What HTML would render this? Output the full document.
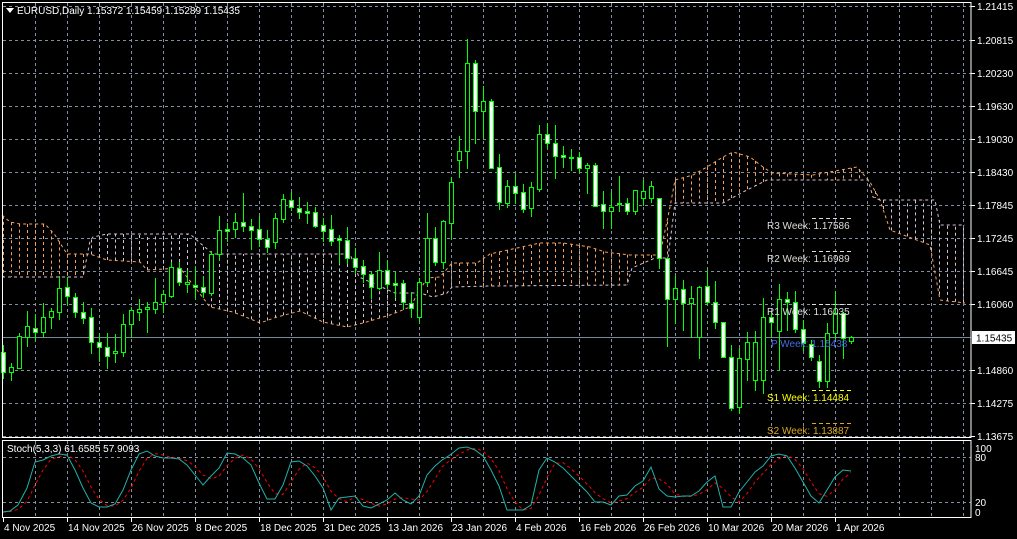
<!DOCTYPE html>
<html><head><meta charset="utf-8"><style>
html,body{margin:0;padding:0;background:#000;width:1017px;height:539px;overflow:hidden}
svg{display:block}
text{font-family:"Liberation Sans",sans-serif;font-size:10px}
</style></head><body>
<svg id="s" width="1017" height="539" viewBox="0 0 1017 539" xmlns="http://www.w3.org/2000/svg">
<rect width="1017" height="539" fill="#000"/>
<g id="grid"></g>
<g id="cloud"></g>
<line x1="2" y1="337.5" x2="971" y2="337.5" stroke="#778899" stroke-width="1"/>
<g id="piv">
<line x1="812" y1="218.5" x2="852" y2="218.5" stroke="#ddd" stroke-dasharray="4,3"/>
<line x1="812" y1="251.5" x2="852" y2="251.5" stroke="#ddd" stroke-dasharray="4,3"/>
<line x1="812" y1="304.5" x2="852" y2="304.5" stroke="#ddd" stroke-dasharray="4,3"/>
<line x1="812" y1="390.5" x2="852" y2="390.5" stroke="#ff0" stroke-dasharray="4,3"/>
<line x1="812" y1="423.5" x2="852" y2="423.5" stroke="#daa520" stroke-dasharray="4,3"/>
</g>
<g id="candles"></g>
<g>
<text x="767" y="229" fill="#ddd">R3 Week: 1.17586</text>
<text x="767" y="262" fill="#ddd">R2 Week: 1.16989</text>
<text x="767" y="315" fill="#ddd">R1 Week: 1.16035</text>
<text x="771" y="347" fill="#4169e1">P Week: 1.15438</text>
<text x="767" y="401" fill="#ff0">S1 Week: 1.14484</text>
<text x="767" y="434" fill="#daa520">S2 Week: 1.13887</text>
</g>
<rect x="2.5" y="2.5" width="968.5" height="435" fill="none" stroke="#fff"/>
<rect x="2.5" y="440.5" width="968.5" height="77" fill="none" stroke="#fff"/>
<g id="stoch"></g>
<polygon points="6,8 14,8 10,13" fill="#fff"/>
<text x="17" y="14" fill="#fff">EURUSD,Daily  1.15372 1.15459 1.15289 1.15435</text>
<text x="7" y="452" fill="#fff">Stoch(5,3,3) 61.6585 57.9093</text>
<g id="axis"></g>
<rect x="972" y="331" width="43" height="13" fill="#fff"/>
<text x="976" y="341.5" fill="#000">1.15435</text>
</svg>
<script>
var NS="http://www.w3.org/2000/svg";
function el(p,t,a,txt){var e=document.createElementNS(NS,t);for(var k in a)e.setAttribute(k,a[k]);if(txt)e.textContent=txt;document.getElementById(p).appendChild(e);return e;}
// grid
var gy=[6,40,73,106,139,172,205,238,271,304,370,403,436];
gy.forEach(function(y){el("grid","line",{x1:3,x2:971,y1:y+.5,y2:y+.5,stroke:"#8090a0","stroke-dasharray":"3,3"});});
for(var x=35;x<971;x+=32){el("grid","line",{x1:x+.5,x2:x+.5,y1:3,y2:437,stroke:"#8090a0","stroke-dasharray":"3,3"});
 el("grid","line",{x1:x+.5,x2:x+.5,y1:441,y2:517,stroke:"#8090a0","stroke-dasharray":"3,3"});}
[457,502].forEach(function(y){el("grid","line",{x1:3,x2:971,y1:y+.5,y2:y+.5,stroke:"#8090a0","stroke-dasharray":"3,3"});});
// axis labels
var pl=[["1.21415",6],["1.20815",40],["1.20230",73],["1.19630",106],["1.19030",139],["1.18430",172],["1.17845",205],["1.17245",238],["1.16645",271],["1.16060",304],["1.14860",370],["1.14275",403],["1.13675",436]];
pl.forEach(function(p){el("axis","text",{x:977,y:p[1]+4,fill:"#fff"},p[0]);el("axis","line",{x1:971,x2:975,y1:p[1]+.5,y2:p[1]+.5,stroke:"#fff"});});
[["100",448],["80",457],["20",502],["0",512]].forEach(function(p){el("axis","text",{x:975,y:p[1]+4,fill:"#fff"},p[0]);});
var tl=[["4 Nov 2025",3],["14 Nov 2025",67],["26 Nov 2025",131],["8 Dec 2025",195],["18 Dec 2025",259],["31 Dec 2025",323],["13 Jan 2026",387],["23 Jan 2026",451],["4 Feb 2026",515],["16 Feb 2026",579],["26 Feb 2026",643],["10 Mar 2026",707],["20 Mar 2026",771],["1 Apr 2026",835]];
tl.forEach(function(t){el("axis","text",{x:t[1]+1,y:531,fill:"#fff"},t[0]);el("axis","line",{x1:t[1]+.5,x2:t[1]+.5,y1:518,y2:522,stroke:"#fff"});});
// cloud
var A=[[2,215],[10,222],[20,224],[45,224],[55,235],[67,254],[90,254],[107,260],[140,262],[147,270],[180,268],[197,290],[210,307],[233,312],[253,320],[260,323],[277,317],[300,311],[323,322],[347,327],[363,323],[390,315],[410,307],[427,278],[440,277],[452,263],[477,263],[490,254],[517,248],[540,243],[563,243],[590,247],[605,252],[630,255],[660,255],[670,207],[675,180],[693,175],[707,167],[723,157],[733,152],[750,157],[763,167],[772,173],[813,175],[857,167],[870,182],[880,200],[890,230],[930,245],[940,300],[965,303]];
var B=[[2,277],[83,277],[90,241],[93,237],[107,234],[190,234],[200,243],[213,254],[350,254],[359,277],[395,293],[420,293],[433,297],[447,293],[452,287],[490,286],[627,285],[632,268],[655,258],[668,258],[675,203],[723,203],[743,192],[767,180],[868,180],[873,197],[880,200],[935,200],[940,225],[965,225]];
function ev(P,x){for(var i=1;i<P.length;i++){if(x<=P[i][0]){var a=P[i-1],b=P[i];return a[1]+(b[1]-a[1])*(x-a[0])/(b[0]-a[0]);}}return P[P.length-1][1];}
var OR="#f4a460",LV="#d8bfd8";
for(var x=3;x<=963;x+=8){var a=ev(A,x),b=ev(B,x);el("cloud","line",{x1:x+.5,x2:x+.5,y1:a,y2:b,stroke:a<b?OR:LV,"stroke-dasharray":"3,3"});}
el("cloud","polyline",{points:A.map(function(p){return p.join(",")}).join(" "),fill:"none",stroke:OR,"stroke-dasharray":"3,3"});
el("cloud","polyline",{points:B.map(function(p){return p.join(",")}).join(" "),fill:"none",stroke:LV,"stroke-dasharray":"3,3"});
// candles: [open, close, high, low]
var C=[[352,372,345,378],[372,367,363,380],[368,336,333,368],[337,326,311,346],[328,332,314,340],[332,317,303,336],[317,311,308,328],[312,288,276,319],[287,296,277,304],[297,312,293,317],[312,318,302,323],[317,342,308,353],[342,347,334,361],[347,356,333,368],[353,351,334,362],[352,324,314,356],[324,310,307,337],[312,309,299,320],[309,307,302,332],[309,302,278,313],[302,294,290,312],[296,267,262,297],[268,282,262,285],[284,282,270,292],[285,287,267,298],[287,292,276,297],[293,254,251,295],[254,230,216,260],[229,231,223,241],[229,222,213,237],[222,226,193,231],[226,230,219,249],[229,239,216,246],[239,247,230,252],[242,218,213,248],[219,199,194,222],[200,207,192,210],[208,212,197,218],[211,213,202,223],[212,226,207,227],[225,231,218,241],[229,241,215,245],[238,240,235,263],[240,258,227,263],[258,267,248,273],[266,274,260,282],[274,287,272,298],[288,270,252,289],[270,284,260,288],[283,285,272,297],[283,302,280,308],[303,308,292,317],[317,282,278,322],[282,238,213,285],[238,262,227,265],[262,221,220,268],[223,182,177,238],[160,151,136,177],[151,63,39,168],[63,111,60,143],[111,101,86,138],[101,168,99,168],[167,202,154,209],[203,186,180,207],[186,193,174,203],[192,209,184,212],[208,187,182,216],[189,134,125,191],[134,143,123,148],[143,156,125,178],[155,157,146,167],[157,158,149,170],[157,168,152,172],[168,165,163,193],[165,206,163,206],[204,211,191,228],[211,207,191,228],[203,204,176,211],[203,211,198,214],[211,190,190,214],[198,191,180,205],[198,186,181,202],[198,258,198,268],[258,299,258,346],[299,288,276,323],[289,303,280,330],[303,298,286,337],[337,287,286,358],[286,302,270,305],[302,322,281,328],[322,357,322,357],[357,408,345,410],[407,358,348,413],[359,342,332,380],[380,342,331,390],[380,317,298,393],[317,322,313,337],[331,299,284,370],[299,302,292,330],[302,329,291,332],[329,343,320,350],[344,357,340,360],[361,381,355,387],[381,333,323,387],[333,313,291,338],[313,338,312,358],[341,337,336,343]];
C.forEach(function(c,k){var x=3+8*k,o=c[0],cl=c[1],h=c[2],l=c[3];
 el("candles","line",{x1:x+.5,x2:x+.5,y1:h,y2:l+1,stroke:"#00ff00"});
 var t=Math.min(o,cl),bt=Math.max(o,cl);var bear=cl>o;
 if(bt-t<1){el("candles","line",{x1:x-2,x2:x+3,y1:t+.5,y2:t+.5,stroke:"#00ff00",'stroke-width':2});}
 else el("candles","rect",{x:x-1.5,y:t+.5,width:4,height:bt-t,fill:bear?"#fff":"#000",stroke:"#00ff00"});
});
// stochastic
var S=[[3,512],[10,511],[18,505],[27,488],[35,462],[43,460],[51,456],[59,454],[67,455],[75,470],[83,488],[91,503],[99,507],[107,507],[115,504],[123,490],[131,470],[139,454],[147,451],[155,456],[163,458],[171,458],[179,459],[187,465],[195,475],[203,485],[211,476],[219,468],[227,453],[235,454],[243,458],[251,465],[259,483],[267,499],[275,499],[283,485],[291,462],[299,461],[307,466],[315,476],[323,488],[331,510],[339,498],[347,497],[355,496],[363,506],[371,508],[379,504],[387,500],[395,493],[403,500],[411,504],[419,496],[427,475],[435,466],[442,460],[450,455],[459,448],[467,447],[475,450],[483,456],[491,470],[499,486],[507,510],[515,510],[523,510],[531,505],[539,470],[547,458],[555,462],[563,468],[571,476],[579,484],[587,492],[595,502],[603,502],[611,505],[619,496],[627,495],[635,486],[643,481],[651,467],[659,489],[667,496],[675,497],[683,496],[691,496],[699,491],[707,482],[715,476],[723,507],[731,507],[739,492],[747,482],[755,472],[763,466],[771,456],[779,454],[787,456],[795,468],[803,482],[811,496],[819,503],[827,490],[835,477],[843,470],[851,471]];
var sig=S.map(function(p,i){var a=S[Math.max(0,i-2)][1],b=S[Math.max(0,i-1)][1];return [p[0],(a+b+p[1])/3];});
el("stoch","polyline",{points:sig.map(function(p){return p.join(",")}).join(" "),fill:"none",stroke:"#ff0000","stroke-dasharray":"3,3"});
el("stoch","polyline",{points:S.map(function(p){return p.join(",")}).join(" "),fill:"none",stroke:"#20b2aa"});
</script>
</body></html>
